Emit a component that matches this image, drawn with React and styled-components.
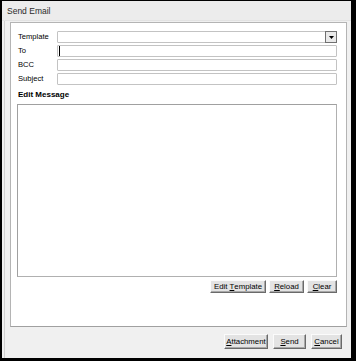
import styled, { createGlobalStyle } from "styled-components";

const GlobalStyle = createGlobalStyle`
  html, body {
    margin: 0;
    padding: 0;
    background: #000;
  }
  body {
    font-family: "Liberation Sans", Arial, sans-serif;
    color: #000;
  }
`;

const Window = styled.div`
  box-sizing: border-box;
  width: 349px;
  height: 357px;
  margin: 1px 0 0 2px;
  background: #f0f0f0;
  display: flex;
  flex-direction: column;
`;

const TitleBar = styled.div`
  height: 19px;
  padding-left: 5px;
  display: flex;
  align-items: center;
  font-size: 8.5px;
  color: #2b2b2b;
  background: #ececec;
  border-bottom: 1px solid #e2e2e2;
`;

const Body = styled.div`
  flex: 1;
  display: flex;
  flex-direction: column;
  padding: 1px 4px 0 2px;
  border-left: 1px solid #d0d0d0;
  margin-left: 2px;
`;

const Panel = styled.div`
  box-sizing: border-box;
  margin-left: 3px;
  height: 305px;
  background: #fff;
  border: 1px solid #b4b4b4;
  border-bottom-color: #a0a0a0;
  padding: 8px 9px 0 7px;
  display: flex;
  flex-direction: column;
`;

const FormGrid = styled.div`
  display: grid;
  grid-template-columns: 39px 1fr;
  grid-auto-rows: 12px;
  row-gap: 2px;
  align-items: center;
`;

const Label = styled.div`
  font-size: 7.6px;
  line-height: 12px;
`;

const Field = styled.div`
  box-sizing: border-box;
  height: 12px;
  border: 1px solid #c3c3c3;
  border-radius: 1px;
  background: #fff;
  display: flex;
  align-items: center;
  justify-content: ${(p) => (p.$combo ? "flex-end" : "flex-start")};
`;

const Caret = styled.span`
  width: 1px;
  height: 10px;
  margin-left: 1px;
  background: #000;
`;

const DropButton = styled.span`
  box-sizing: border-box;
  width: 12px;
  height: 12px;
  margin-right: -1px;
  border: 1px solid #707070;
  background: #e9e9e9;
  display: flex;
  align-items: center;
  justify-content: center;
`;

const Heading = styled.div`
  margin-top: 5px;
  font-size: 8px;
  font-weight: bold;
  line-height: 10px;
`;

const MessageBox = styled.div`
  box-sizing: border-box;
  margin: 4px 0 0 -1px;
  height: 173px;
  border: 1px solid #b0b0b0;
  border-top-color: #a0a0a0;
  border-left-color: #a0a0a0;
  background: #fff;
`;

const ButtonRow = styled.div`
  display: flex;
  justify-content: flex-end;
  gap: ${(p) => p.$gap}px;
  margin-top: ${(p) => p.$top}px;
  padding-right: ${(p) => p.$right}px;
`;

const Button = styled.button`
  box-sizing: border-box;
  width: ${(p) => p.$w}px;
  height: ${(p) => p.$h}px;
  padding: 0;
  font-family: "Liberation Sans", Arial, sans-serif;
  font-size: 7.8px;
  color: #000;
  background: #e3e3e3;
  border: 1px solid;
  border-color: #fbfbfb #6a6a6a #6a6a6a #fbfbfb;
  box-shadow: inset -1px -1px 0 #a8a8a8;
  display: flex;
  align-items: center;
  justify-content: center;
  line-height: 1;

  u {
    text-decoration-thickness: 1px;
    text-underline-offset: 1px;
  }
`;

const Footer = styled(ButtonRow)``;

const fields = ["Template", "To", "BCC", "Subject"];

export default function App() {
  return (
    <>
      <GlobalStyle />
      <Window>
        <TitleBar>Send Email</TitleBar>
        <Body>
          <Panel>
            <FormGrid>
              {fields.map((name) => (
                <FieldRow key={name} name={name} />
              ))}
            </FormGrid>
            <Heading>Edit Message</Heading>
            <MessageBox />
            <ButtonRow $gap={3} $top={3} $right={0}>
              <Button $w={56} $h={13}>
                Edit&nbsp;<u>T</u>emplate
              </Button>
              <Button $w={35} $h={13}>
                <u>R</u>eload
              </Button>
              <Button $w={30} $h={13}>
                <u>C</u>lear
              </Button>
            </ButtonRow>
          </Panel>
          <Footer $gap={5} $top={7} $right={5}>
            <Button $w={44} $h={15}>
              <u>A</u>ttachment
            </Button>
            <Button $w={33} $h={15}>
              <u>S</u>end
            </Button>
            <Button $w={31} $h={15}>
              <u>C</u>ancel
            </Button>
          </Footer>
        </Body>
      </Window>
    </>
  );
}

function FieldRow({ name }) {
  return (
    <>
      <Label>{name}</Label>
      {name === "Template" ? (
        <Field $combo>
          <DropButton>
            <svg width="5" height="3" viewBox="0 0 5 3">
              <path d="M0 0h5L2.5 3z" fill="#000" />
            </svg>
          </DropButton>
        </Field>
      ) : (
        <Field>{name === "To" && <Caret />}</Field>
      )}
    </>
  );
}
